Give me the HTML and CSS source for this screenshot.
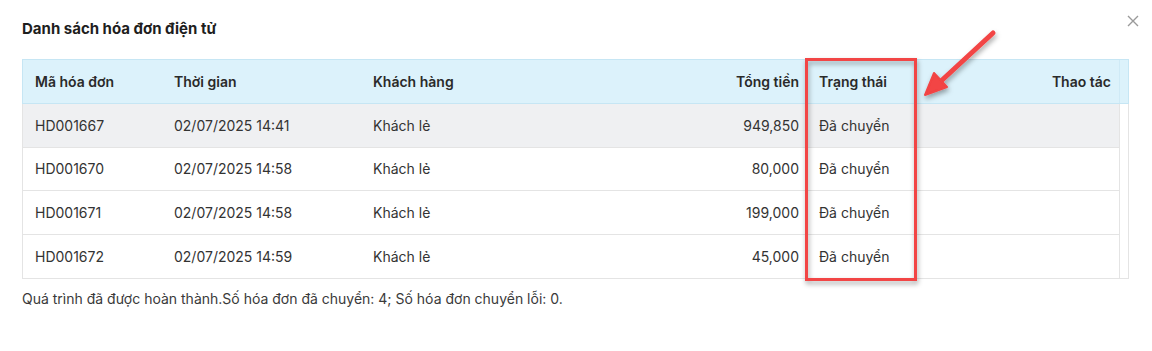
FILE: index.html
```html
<!DOCTYPE html>
<html lang="vi">
<head>
    <meta charset="UTF-8">
    <meta name="viewport" content="width=device-width, initial-scale=1.0">
    <title>Danh sách hóa đơn điện tử</title>
    <link rel="stylesheet" href="styles.css">
</head>
<body>
    <div class="modal">
        <div class="modal-head">
            <div class="modal-title">Danh sách hóa đơn điện tử</div>
            <button class="close" aria-label="Đóng">
                <svg width="12" height="12" viewBox="0 0 12 12"><path d="M1 1L11 11M11 1L1 11" stroke="#9a9a9a" stroke-width="1.4" fill="none"/></svg>
            </button>
        </div>

        <div class="grid">
            <div class="grid-head">
                <div class="row">
                    <div class="cell">Mã hóa đơn</div>
                    <div class="cell">Thời gian</div>
                    <div class="cell">Khách hàng</div>
                    <div class="cell right">Tổng tiền</div>
                    <div class="cell">Trạng thái</div>
                    <div class="cell right">Thao tác</div>
                </div>
                <div class="gutter"></div>
            </div>
            <div class="grid-body">
                <div class="rows">
                    <div class="row hover">
                        <div class="cell">HD001667</div>
                        <div class="cell">02/07/2025 14:41</div>
                        <div class="cell">Khách lẻ</div>
                        <div class="cell right">949,850</div>
                        <div class="cell">Đã chuyển</div>
                        <div class="cell"></div>
                    </div>
                    <div class="row">
                        <div class="cell">HD001670</div>
                        <div class="cell">02/07/2025 14:58</div>
                        <div class="cell">Khách lẻ</div>
                        <div class="cell right">80,000</div>
                        <div class="cell">Đã chuyển</div>
                        <div class="cell"></div>
                    </div>
                    <div class="row">
                        <div class="cell">HD001671</div>
                        <div class="cell">02/07/2025 14:58</div>
                        <div class="cell">Khách lẻ</div>
                        <div class="cell right">199,000</div>
                        <div class="cell">Đã chuyển</div>
                        <div class="cell"></div>
                    </div>
                    <div class="row last">
                        <div class="cell">HD001672</div>
                        <div class="cell">02/07/2025 14:59</div>
                        <div class="cell">Khách lẻ</div>
                        <div class="cell right">45,000</div>
                        <div class="cell">Đã chuyển</div>
                        <div class="cell"></div>
                    </div>
                </div>
                <div class="gutter"></div>
            </div>
        </div>

        <div class="status">Quá trình đã được hoàn thành.Số hóa đơn đã chuyển: 4; Số hóa đơn chuyển lỗi: 0.</div>
    </div>

    <!-- Annotation drawn over the screenshot -->
    <svg class="annotation" width="1152" height="351" viewBox="0 0 1152 351">
        <defs>
            <filter id="shadow" x="-20%" y="-20%" width="140%" height="140%">
                <feDropShadow dx="1" dy="3" stdDeviation="2.5" flood-color="#000" flood-opacity="0.35"/>
            </filter>
        </defs>
        <rect x="806.5" y="59.5" width="109" height="220" fill="none" stroke="#f24444" stroke-width="3" filter="url(#shadow)"/>
        <g filter="url(#shadow)">
            <path d="M993 33L940 82" stroke="#f24444" stroke-width="5" stroke-linecap="round" fill="none"/>
            <path d="M925 95L934 73L947 87Z" fill="#f24444" stroke="#f24444" stroke-width="2" stroke-linejoin="round"/>
        </g>
    </svg>
</body>
</html>
```

FILE: styles.css
```css
body {
    margin: 0;
    background: #fff;
    font-family: Inter, "Noto Sans", sans-serif;
    font-size: 14px;
    color: #333;
}

.modal {
    padding: 20px 22px 0 22px;
}

.modal-head {
    display: flex;
    justify-content: space-between;
    align-items: flex-start;
    height: 39px;
}

.modal-title {
    font-size: 15px;
    font-weight: 700;
    line-height: 18px;
    color: #1e1e1e;
}

.close {
    border: 0;
    background: none;
    padding: 0;
    margin: -5px -9px 0 0;
    width: 12px;
    height: 12px;
    cursor: pointer;
}

.grid {
    width: 1105px;
    border: 1px solid #e4e4e4;
    border-top: 0;
}

.grid-head {
    display: flex;
    background: #dcf2fb;
    border: 1px solid #c6e6f4;
    margin: 0 -1px;
    font-weight: 600;
    color: #2a2a2a;
}

.grid-head .gutter {
    width: 8px;
    border-left: 1px solid #cfeaf6;
}

.grid-body {
    display: flex;
}

.rows {
    flex: 1;
}

.grid-body .gutter {
    width: 8px;
    border-left: 1px solid #e4e4e4;
}

.row {
    display: grid;
    grid-template-columns: 139px 199px 246px 200px 110px 1fr;
    align-items: center;
    box-sizing: border-box;
    height: 43.5px;
    border-bottom: 1px solid #e4e4e4;
}

.grid-head .row {
    height: 43px;
    border-bottom: 0;
    flex: 1;
}

.row.last {
    border-bottom: 0;
}

.row.hover {
    background: #eff0f2;
}

.cell {
    padding: 0 8px 0 12px;
    white-space: nowrap;
}

.cell.right {
    text-align: right;
}

.status {
    margin-top: 11px;
    line-height: 17px;
    color: #3a3a3a;
}

.annotation {
    position: absolute;
    top: 0;
    left: 0;
    pointer-events: none;
}
```
